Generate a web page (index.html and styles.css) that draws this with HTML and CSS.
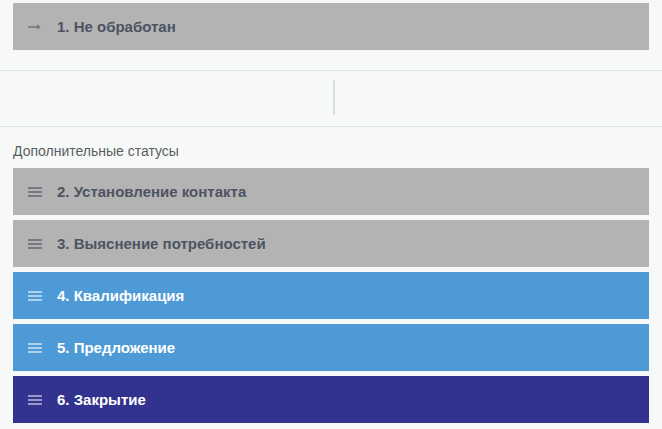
FILE: index.html
```html
<!DOCTYPE html>
<html lang="ru">
<head>
<meta charset="utf-8">
<link rel="stylesheet" href="styles.css">
</head>
<body>
<div class="main">
  <div class="status status-gray">
    <span class="icon">
      <svg width="14" height="8" viewBox="0 0 14 8"><path d="M0 4H12" stroke="currentColor" stroke-width="1.6"/><path d="M9 1.2L12.6 4L9 6.8Z" fill="currentColor"/></svg>
    </span>
    <span class="name">1. Не обработан</span>
  </div>
</div>
<div class="divider">
  <div class="vline"></div>
</div>
<div class="extra">
  <div class="label">Дополнительные статусы</div>
  <div class="list">
    <div class="status status-gray">
      <span class="icon burger"><i></i><i></i><i></i></span>
      <span class="name">2. Установление контакта</span>
    </div>
    <div class="status status-gray">
      <span class="icon burger"><i></i><i></i><i></i></span>
      <span class="name">3. Выяснение потребностей</span>
    </div>
    <div class="status status-blue">
      <span class="icon burger"><i></i><i></i><i></i></span>
      <span class="name">4. Квалификация</span>
    </div>
    <div class="status status-blue">
      <span class="icon burger"><i></i><i></i><i></i></span>
      <span class="name">5. Предложение</span>
    </div>
    <div class="status status-dark">
      <span class="icon burger"><i></i><i></i><i></i></span>
      <span class="name">6. Закрытие</span>
    </div>
  </div>
</div>
</body>
</html>
```
FILE: styles.css
```css
html, body {
  margin: 0;
  padding: 0;
  background: #f7f9f8;
  font-family: "Liberation Sans", Arial, sans-serif;
}
.main {
  padding: 3px 13px 20px;
}
.status {
  height: 47px;
  display: flex;
  align-items: center;
  padding-left: 15px;
  box-sizing: border-box;
}
.status-gray { background: #b3b3b3; color: #4e5362; }
.status-gray .icon { color: #757981; }
.status-blue { background: #4d9ad6; color: #ffffff; }
.status-blue .icon { color: rgba(255,255,255,0.55); }
.status-dark { background: #31338f; color: #ffffff; }
.status-dark .icon { color: rgba(255,255,255,0.5); }
.icon {
  width: 14px;
  display: flex;
  align-items: center;
  margin-right: 15px;
}
.icon svg { display: block; }
.burger {
  flex-direction: column;
  gap: 2px;
}
.burger i {
  display: block;
  width: 14px;
  height: 2px;
  background: currentColor;
}
.name {
  font-size: 15px;
  font-weight: bold;
}
.divider {
  border-top: 1px solid #dfe2e2;
  border-bottom: 1px solid #dfe2e2;
  height: 57px;
  box-sizing: border-box;
  display: flex;
  justify-content: center;
  padding-top: 9px;
}
.vline {
  width: 2px;
  height: 35px;
  margin-left: 6px;
  background: #d9dce3;
}
.extra {
  padding: 17px 13px 0;
}
.label {
  font-family: "Liberation Sans", Arial, sans-serif;
  font-size: 14px;
  color: #5a5e63;
  line-height: 15px;
  margin-bottom: 9px;
}
.list {
  display: flex;
  flex-direction: column;
  gap: 5px;
}
```
